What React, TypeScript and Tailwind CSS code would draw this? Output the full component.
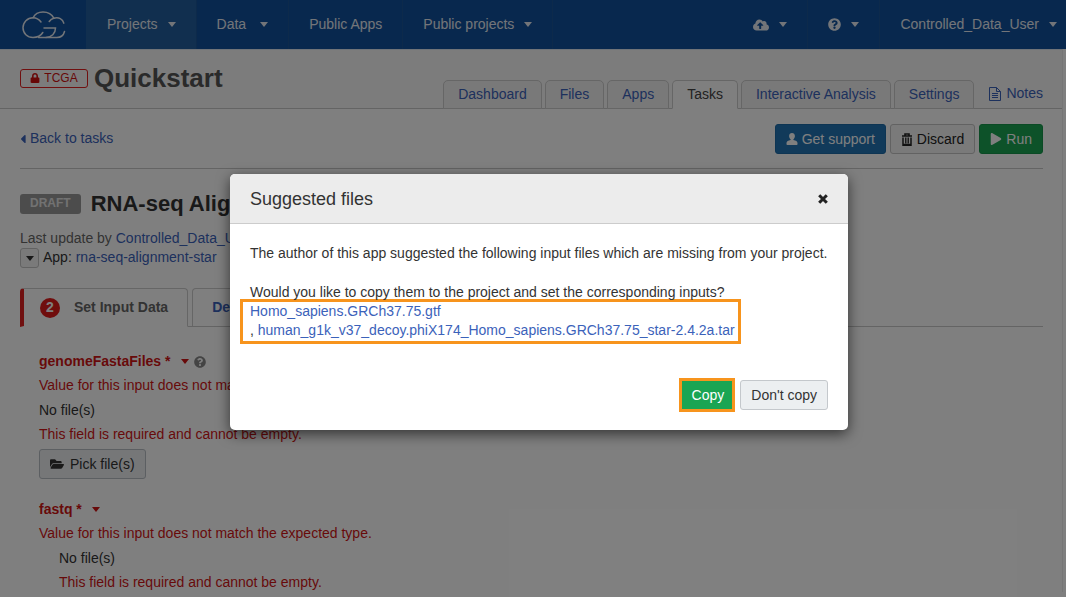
import type { ReactNode } from 'react'
import { FaCaretLeft, FaCloudUploadAlt, FaFolderOpen, FaLock, FaPlay, FaQuestionCircle } from 'react-icons/fa'

const tabs = ['Dashboard', 'Files', 'Apps', 'Tasks', 'Interactive Analysis', 'Settings']

function Caret({ className = '' }: { className?: string }) {
  return (
    <svg viewBox="0 0 8 5" className={`w-2 h-[5px] shrink-0 ${className}`} fill="currentColor" aria-hidden="true">
      <path d="M0 0h8L4 5z" />
    </svg>
  )
}

function Logo() {
  return (
    <svg viewBox="0 0 44 28" className="w-11 h-7" fill="none" stroke="currentColor" strokeWidth="1.5" strokeLinecap="round" aria-hidden="true">
      <path d="M19 11C17 8.300 14.200 6.800 11 6.800C5.300 6.800 1 11.200 1 16.700S5.300 26.500 11 26.500C15.200 26.500 18.800 24.800 20.800 21.500" />
      <path d="M11 6.800C12.800 3.200 16.500 1 21 1C26 1 30 3.500 31.800 7.200C30 7.600 28.400 8.800 27.200 10.500" />
      <path d="M22 17H33.500C33.500 22.500 29.500 26.500 24 26.500H16.500" />
      <path d="M31.800 7.200C36.800 5.900 40.800 8 41.800 12.200" />
      <path d="M42.500 20.500C41.600 24.200 38.500 26.500 34.800 26.500H24" />
    </svg>
  )
}

function UserIcon() {
  return (
    <svg viewBox="0 0 12 12" className="size-3" fill="currentColor" aria-hidden="true">
      <path d="M6 0C4.300 0 3.100 1.300 3.100 3c0 1.300.6 2.600 1.500 3.300v.6C2.200 7.400.5 8.100.5 10v1.200c0 .5.300.8.800.8h9.400c.5 0 .8-.3.8-.8V10c0-1.900-1.700-2.600-4.100-3.100v-.6C8.300 5.600 8.900 4.300 8.900 3 8.900 1.300 7.700 0 6 0z" />
    </svg>
  )
}

function TrashIcon() {
  return (
    <svg viewBox="0 0 12 13" className="w-3 h-[13px]" fill="none" stroke="currentColor" aria-hidden="true">
      <path d="M1 3h10M4 2.500V1h4v1.500" strokeWidth="1.600" />
      <path d="M2 4.500v7.700h8V4.500" strokeWidth="1.500" />
      <path d="M4.500 4.500v6M6 4.500v6M7.500 4.500v6" strokeWidth="0.9" />
      <path d="M2 11.500h8" strokeWidth="1.500" />
    </svg>
  )
}

function NotesIcon() {
  return (
    <svg viewBox="0 0 12 14" className="w-3 h-[14px]" fill="none" stroke="currentColor" aria-hidden="true">
      <path d="M.5.5h7l4 4v9H.5zM7.500.5v4h4" />
      <path d="M3 6.500h6M3 8.500h6M3 10.500h6" />
    </svg>
  )
}

function CloseIcon() {
  return (
    <svg viewBox="0 0 10 10" className="size-[10px]" fill="none" stroke="currentColor" strokeWidth="3" aria-hidden="true">
      <path d="M1.200 1.200l7.600 7.600M8.800 1.200L1.200 8.800" />
    </svg>
  )
}

function NavItem({ children, className = '' }: { children: ReactNode; className?: string }) {
  return (
    <button type="button" className={`flex items-center h-full border-r border-[#1a5597] ${className}`}>
      {children}
    </button>
  )
}

function Navbar() {
  return (
    <nav className="flex h-[49px] bg-[#10509c] text-[#e6ebf2]">
      <a href="#" aria-label="Home" className="flex items-center pl-[22px] w-[86px]">
        <Logo />
      </a>
      <NavItem className="pl-[21px] pr-5 gap-[10px] bg-[#225e9e]">
        Projects <Caret />
      </NavItem>
      <NavItem className="px-5 gap-[14px]">
        Data <Caret />
      </NavItem>
      <NavItem className="px-5">Public Apps</NavItem>
      <NavItem className="px-5 gap-[10px]">
        Public projects <Caret />
      </NavItem>
      <div className="flex ml-auto">
        <NavItem className="px-5 gap-[10px]">
          <FaCloudUploadAlt className="size-4" title="Upload" /> <Caret />
        </NavItem>
        <NavItem className="px-5 gap-[10px]">
          <FaQuestionCircle className="size-[13px]" title="Help" /> <Caret />
        </NavItem>
        <button type="button" className="flex items-center pl-5 pr-[9px] gap-[10px]">
          Controlled_Data_User <Caret />
        </button>
      </div>
    </nav>
  )
}

function ProjectHeader() {
  return (
    <header className="flex items-end justify-between h-[60px] pl-5 pr-[19px] bg-[#f8f8f8] border-t border-t-[#dfe6f0] border-b border-b-[#c8c8c8]">
      <div className="flex items-center gap-[6px] pb-[14px]">
        <span className="flex items-center justify-center gap-1 w-[68px] h-[19px] rounded-[3px] border border-[#e02020] text-xs text-[#d01010]">
          <FaLock className="size-[10px]" /> TCGA
        </span>
        <h1 className="text-[26px] leading-8 font-bold text-[#555]">Quickstart</h1>
      </div>
      <div className="flex items-end -mb-px">
        <ul className="flex gap-[3px]">
          {tabs.map((tab) => (
            <li key={tab}>
              <a
                href="#"
                className={`block h-[29px] px-[14px] pt-1 rounded-t-[5px] border border-[#ccc] ${
                  tab === 'Tasks' ? 'bg-white border-b-white text-[#444]' : 'bg-[#f3f3f3] text-[#3b62ba]'
                }`}
              >
                {tab}
              </a>
            </li>
          ))}
        </ul>
        <a href="#" className="flex items-center gap-[5px] ml-[15px] pb-[6px] text-[#3b62ba]">
          <NotesIcon /> Notes
        </a>
      </div>
    </header>
  )
}

function InputTitle({ name, help }: { name: string; help?: boolean }) {
  return (
    <h3 className="flex items-center font-bold">
      {name} *
      <Caret className="ml-[10px]" />
      {help && <FaQuestionCircle className="ml-[5px] size-3 text-[#888]" />}
    </h3>
  )
}

function TaskPage() {
  return (
    <main className="pl-5 pr-[19px]">
      <div className="flex items-start justify-between pt-[15px] pb-[14px] border-b border-[#c8c8c8]">
        <a href="#" className="flex items-center gap-1 mt-[5px] text-[#3b62ba]">
          <FaCaretLeft className="w-[6px]" /> Back to tasks
        </a>
        <div className="flex gap-1 h-[30px]">
          <button type="button" className="flex items-center gap-1 px-[10px] rounded-[3px] border border-[#1d6aa6] bg-[#2275b5] text-white">
            <UserIcon /> Get support
          </button>
          <button type="button" className="flex items-center gap-1 px-[10px] rounded-[3px] border border-[#c4c4c4] bg-[#f4f4f4] text-[#222]">
            <TrashIcon /> Discard
          </button>
          <button type="button" className="flex items-center gap-1 px-[10px] rounded-[3px] border border-[#16944a] bg-[#1aa553] text-white">
            <FaPlay className="size-3" /> Run
          </button>
        </div>
      </div>

      <div className="flex items-center gap-[10px] pt-[19px]">
        <span className="px-[10px] h-5 leading-[18px] rounded-[3px] bg-[#999] text-xs font-bold text-[#e4e4e4]">DRAFT</span>
        <h2 className="text-[22px] leading-8 font-bold text-[#333]">RNA-seq Alignment - STAR</h2>
      </div>
      <p className="pt-[9px] text-[#666]">
        Last update by <a href="#" className="text-[#3b62ba]">Controlled_Data_User</a>
      </p>
      <div className="flex items-start gap-1 text-[#333]">
        <button type="button" aria-label="More" className="flex items-center justify-center w-[19px] h-5 rounded-[3px] border border-[#c4c4c4] bg-[#f4f4f4]">
          <Caret />
        </button>
        <p>
          App: <a href="#" className="text-[#3b62ba]">rna-seq-alignment-star</a>
        </p>
      </div>

      <div className="flex gap-1 mt-5 border-b border-[#c8c8c8]">
        <button type="button" className="flex items-center h-[39px] -mb-px pl-4 pr-[19px] rounded-t-[4px] border border-l-4 border-[#ccc] border-l-[#e02020] border-b-white bg-white font-bold text-[#666]">
          <span className="flex items-center justify-center size-5 mr-[14px] rounded-full bg-[#e01b1b] text-white">2</span>
          Set Input Data
        </button>
        <button type="button" className="h-[38px] px-[19px] rounded-t-[4px] border border-b-0 border-[#ccc] font-bold text-[#3b62ba]">
          Define App Settings
        </button>
      </div>

      <section className="pl-[19px] pt-[25px] text-[#d01414]">
        <InputTitle name="genomeFastaFiles" help />
        <p className="mt-[5px]">Value for this input does not match the expected type.</p>
        <p className="mt-[6px] text-[#333]">No file(s)</p>
        <p className="mt-[5px]">This field is required and cannot be empty.</p>
        <button type="button" className="flex items-center gap-[6px] h-[30px] mt-[5px] px-[10px] rounded-[3px] border border-[#b8bec4] bg-[#eceff1] text-[#333]">
          <FaFolderOpen className="size-[14px]" /> Pick file(s)
        </button>
        <div className="mt-[21px]">
          <InputTitle name="fastq" />
        </div>
        <p className="mt-[5px]">Value for this input does not match the expected type.</p>
        <div className="pl-5">
          <p className="mt-[6px] text-[#333]">No file(s)</p>
          <p className="mt-[5px]">This field is required and cannot be empty.</p>
        </div>
      </section>
    </main>
  )
}

function SuggestedFilesDialog() {
  return (
    <div role="dialog" aria-modal="true" aria-labelledby="dialog-title" className="w-[618px] rounded-[5px] bg-white text-[#333] shadow-[0_4px_14px_rgba(0,0,0,0.6)]">
      <div className="flex items-center justify-between h-[50px] px-5 rounded-t-[5px] border-b border-[#ccc] bg-[#ececec]">
        <h2 id="dialog-title" className="text-lg">Suggested files</h2>
        <button type="button" aria-label="Close" className="text-[#222]">
          <CloseIcon />
        </button>
      </div>
      <div className="px-5 pt-5 pb-[18px]">
        <p>The author of this app suggested the following input files which are missing from your project.</p>
        <p className="mt-5">Would you like to copy them to the project and set the corresponding inputs?</p>
        <div className="w-fit -ml-[10px] -mt-[3px] pl-[7px] pr-[3px] pb-px border-3 border-[#f7941d]">
          <a href="#" className="block w-fit text-[#3b62ba]">Homo_sapiens.GRCh37.75.gtf</a>
          , <a href="#" className="text-[#3b62ba]">human_g1k_v37_decoy.phiX174_Homo_sapiens.GRCh37.75_star-2.4.2a.tar</a>
        </div>
        <div className="flex items-center justify-end gap-[5px] mt-[34px]">
          <button type="button" className="h-[34px] pl-[10px] pr-2 border-3 border-[#f7941d] bg-[#1aa553] text-white">Copy</button>
          <button type="button" className="h-[30px] px-[10px] rounded-[3px] border border-[#c4c8cc] bg-[#eceff1]">Don't copy</button>
        </div>
      </div>
    </div>
  )
}

export default function App() {
  return (
    <div className="relative h-screen overflow-hidden bg-white font-['Liberation_Sans',Arial,sans-serif] text-sm leading-[19px]">
      <Navbar />
      <div className="mr-[3px] border-r border-[#ececec]">
        <ProjectHeader />
        <TaskPage />
      </div>
      <div className="absolute inset-0 flex items-start justify-center pt-[174px] pl-3 bg-black/50">
        <SuggestedFilesDialog />
      </div>
    </div>
  )
}
